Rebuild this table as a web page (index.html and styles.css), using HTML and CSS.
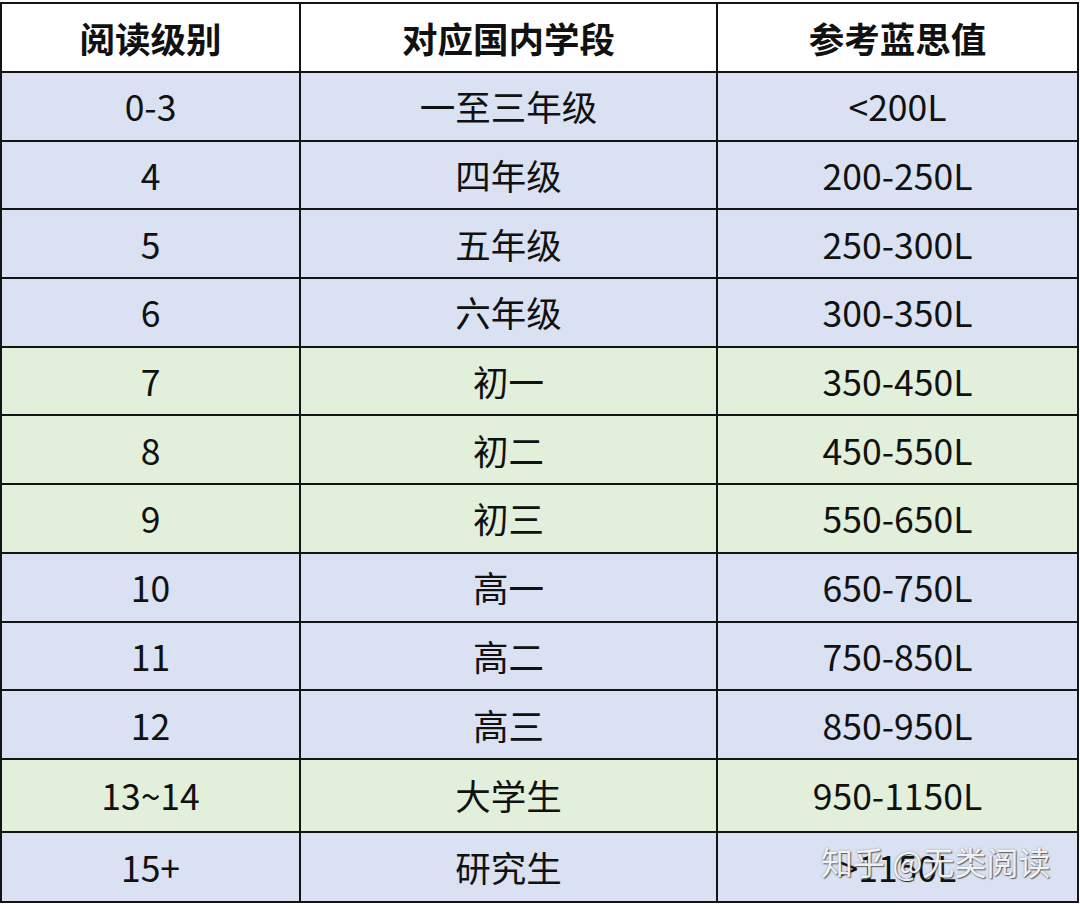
FILE: index.html
```html
<!DOCTYPE html>
<html lang="zh-CN">
<head>
<meta charset="utf-8">
<title>阅读级别</title>
<link rel="stylesheet" href="styles.css">
</head>
<body>
<div class="wrap">
<table class="grid">
  <colgroup><col class="c1"><col class="c2"><col class="c3"></colgroup>
  <thead>
    <tr class="head"><th>阅读级别</th><th>对应国内学段</th><th>参考蓝思值</th></tr>
  </thead>
  <tbody>
    <tr class="blue"><td>0-3</td><td>一至三年级</td><td>&lt;200L</td></tr>
    <tr class="blue"><td>4</td><td>四年级</td><td>200-250L</td></tr>
    <tr class="blue"><td>5</td><td>五年级</td><td>250-300L</td></tr>
    <tr class="blue"><td>6</td><td>六年级</td><td>300-350L</td></tr>
    <tr class="green"><td>7</td><td>初一</td><td>350-450L</td></tr>
    <tr class="green"><td>8</td><td>初二</td><td>450-550L</td></tr>
    <tr class="green"><td>9</td><td>初三</td><td>550-650L</td></tr>
    <tr class="blue"><td>10</td><td>高一</td><td>650-750L</td></tr>
    <tr class="blue"><td>11</td><td>高二</td><td>750-850L</td></tr>
    <tr class="blue"><td>12</td><td>高三</td><td>850-950L</td></tr>
    <tr class="green tall"><td>13~14</td><td>大学生</td><td>950-1150L</td></tr>
    <tr class="blue last"><td>15+</td><td>研究生</td><td class="under">&gt;1150L</td></tr>
  </tbody>
</table>
<div class="mark">知乎 @无类阅读</div>
</div>
</body>
</html>
```
FILE: styles.css
```css
html, body {
  margin: 0;
  padding: 0;
  background: #ffffff;
}
.wrap {
  position: relative;
  width: 1080px;
  height: 909px;
  padding: 2px 0 0 0;
  box-sizing: border-box;
}
.grid {
  border-collapse: collapse;
  table-layout: fixed;
  width: 1077px;
  margin-left: 0;
  font-family: "Noto Sans CJK SC", "Noto Sans", sans-serif;
  color: #111111;
}
.c1 { width: 299px; }
.c2 { width: 417px; }
.c3 { width: 361px; }
.grid th, .grid td {
  border: 2px solid #141414;
  text-align: center;
  vertical-align: middle;
  padding: 0;
  font-size: 35.5px;
  line-height: 40px;
}
.grid th {
  font-weight: 700;
}
.grid td {
  font-weight: 400;
}
.head { height: 69px; background: #ffffff; }
.grid tbody tr { height: 68.7px; }
.grid tbody tr.tall { height: 73px; }
.grid tbody tr.last { height: 70px; }
.blue { background: #d9e1f2; }
.green { background: #e2efda; }
.mark {
  position: absolute;
  left: 821px;
  top: 841px;
  font-family: "Noto Sans CJK SC", sans-serif;
  font-size: 32px;
  line-height: 40px;
  color: rgba(255, 255, 255, 0.92);
  text-shadow: 1px 1px 1px rgba(60, 60, 60, 0.75), 0 0 2px rgba(80, 80, 80, 0.5);
  white-space: nowrap;
}
```
